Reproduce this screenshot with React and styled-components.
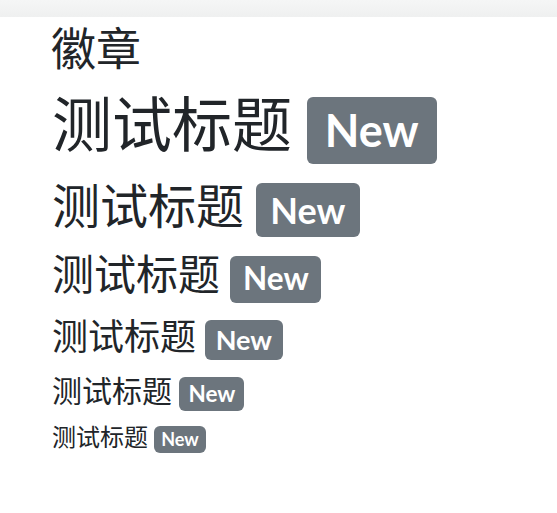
import React from 'react';
import styled, {createGlobalStyle} from 'styled-components';

const GlobalStyle = createGlobalStyle`
  body {
    margin: 0;
    background: #fff;
    color: #212529;
    font-family: "Open Sans", "Noto Sans CJK SC", sans-serif;
  }
`;

const TopBar = styled.div`
  height: 17px;
  background: linear-gradient(#f5f6f6, #eff0f0);
`;

const Page = styled.div`
  padding: 0 0 0 52px;
`;

const Title = styled.div`
  font-size: 45px;
  line-height: 1.2;
  margin: 5px 0 12px -1px;
  font-weight: 400;
`;

const sizes = {1: 60, 2: 48, 3: 42, 4: 36, 5: 30, 6: 24};

const Heading = styled.div`
  font-size: ${p => sizes[p.level]}px;
  line-height: 1.2;
  font-weight: 400;
  margin: 0 0 12.6px;
  white-space: nowrap;
`;

const Badge = styled.span`
  display: inline-block;
  margin-left: 0.33em;
  padding: 0.25em 0.4em;
  font-family: Lato, "Open Sans", sans-serif;
  font-size: 75%;
  font-weight: 700;
  line-height: 1;
  text-align: center;
  white-space: nowrap;
  vertical-align: baseline;
  border-radius: 6px;
  color: #fff;
  background-color: #6c757d;
`;

const App = () => {
  const levels = [1, 2, 3, 4, 5, 6];
  return (
    <>
      <GlobalStyle/>
      <TopBar/>
      <Page>
        <Title>徽章</Title>
        {levels.map(level => (
          <Heading level={level} key={level}>
            测试标题<Badge>New</Badge>
          </Heading>
        ))}
      </Page>
    </>
  );
};

export default App;
